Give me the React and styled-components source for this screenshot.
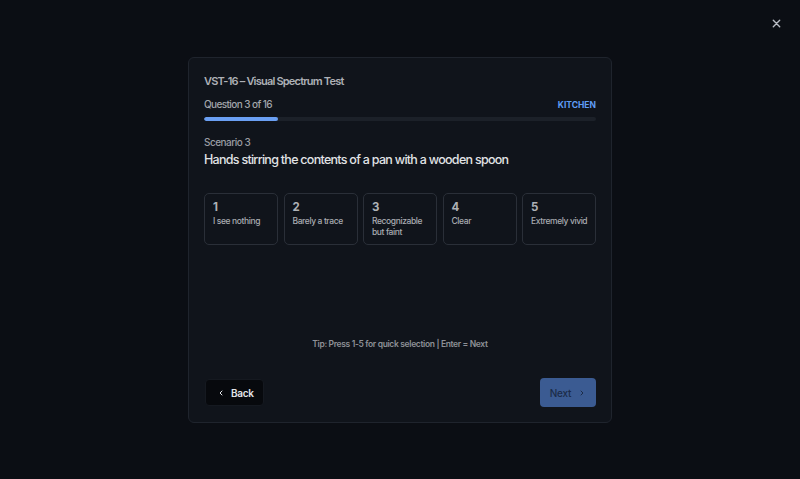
import React from 'react';
import styled, { createGlobalStyle } from 'styled-components';

const GlobalStyle = createGlobalStyle`
  html, body {
    margin: 0;
    padding: 0;
    background: #0b0e14;
    font-family: Inter, "Noto Sans", sans-serif;
  }
  * { box-sizing: border-box; }
`

const Screen = styled.div`
  position: relative;
  width: 800px;
  height: 479px;
  background: #0b0e14;
  display: flex;
  align-items: center;
  justify-content: center;
`

const CloseBtn = styled.button`
  position: absolute;
  top: 16px;
  right: 17px;
  width: 14px;
  height: 14px;
  padding: 0;
  border: none;
  background: none;
  color: #b8bcc4;
  display: flex;
  align-items: center;
  justify-content: center;
  cursor: pointer;
`

const Card = styled.div`
  width: 424px;
  height: 366px;
  margin-top: 1px;
  background: #10141b;
  border: 1px solid #1f242d;
  border-radius: 6px;
  padding: 16px 15px 15px 15px;
  display: flex;
  flex-direction: column;
`

const Title = styled.div`
  font-size: 11px;
  font-weight: 600;
  letter-spacing: -0.8px;
  color: #aeb1b7;
  line-height: 14px;
`

const ProgressHead = styled.div`
  margin-top: 10px;
  display: flex;
  justify-content: space-between;
  align-items: center;
`

const Question = styled.div`
  font-size: 10px;
  font-weight: 500;
  letter-spacing: -0.6px;
  color: #a3a6ac;
  line-height: 13px;
`

const Tag = styled.div`
  font-size: 8.5px;
  font-weight: 700;
  color: #5f9cf5;
`

const Track = styled.div`
  margin-top: 6px;
  height: 4px;
  border-radius: 2px;
  background: #1c2129;
  overflow: hidden;
`

const Fill = styled.div`
  height: 100%;
  border-radius: 2px;
  background: #6a9ff2;
`

const Scenario = styled.div`
  margin-top: 15px;
  font-size: 10px;
  font-weight: 500;
  letter-spacing: -0.5px;
  color: #9a9da3;
  line-height: 13px;
`

const Prompt = styled.div`
  margin-top: 3px;
  font-size: 12.5px;
  font-weight: 500;
  letter-spacing: -0.72px;
  color: #e1e3e6;
  line-height: 16px;
`

const Options = styled.div`
  margin-top: 25px;
  display: grid;
  grid-template-columns: repeat(5, 1fr);
  gap: 5.5px;
`

const Option = styled.button`
  height: 52px;
  background: #10141b;
  border: 1px solid #2a2f38;
  border-radius: 5px;
  padding: 6px 3px 6px 8px;
  text-align: left;
  display: flex;
  flex-direction: column;
  align-items: flex-start;
  justify-content: flex-start;
  font-family: inherit;
  cursor: pointer;
`

const Num = styled.div`
  font-size: 11.5px;
  font-weight: 700;
  color: #aeb1b6;
  line-height: 14px;
`

const Label = styled.div`
  margin-top: 2px;
  font-size: 8.5px;
  font-weight: 500;
  letter-spacing: -0.4px;
  color: #a9acb2;
  line-height: 11px;
`

const Spacer = styled.div`
  flex: 1;
`

const Tip = styled.div`
  text-align: center;
  font-size: 8.5px;
  font-weight: 600;
  letter-spacing: -0.35px;
  color: #8e9197;
  margin-bottom: 29px;
`

const Footer = styled.div`
  display: flex;
  justify-content: space-between;
  align-items: center;
`

const BackBtn = styled.button`
  margin-left: 1px;
  height: 27px;
  padding: 0 9px 0 11px;
  background: #07090d;
  border: 1px solid #151920;
  border-radius: 4px;
  color: #e2e4e8;
  font-family: inherit;
  font-size: 10px;
  font-weight: 600;
  letter-spacing: -0.3px;
  display: flex;
  align-items: center;
  gap: 6px;
  cursor: pointer;
`

const NextBtn = styled.button`
  height: 29px;
  padding: 0 10px;
  background: #3b5b92;
  border: none;
  border-radius: 4px;
  color: #1c2c48;
  font-family: inherit;
  font-size: 10px;
  font-weight: 500;
  letter-spacing: -0.3px;
  display: flex;
  align-items: center;
  gap: 7px;
  cursor: default;
`

const Chevron = ({ dir }) => (
  <svg width="8" height="8" viewBox="0 0 24 24" fill="none" stroke="currentColor" strokeWidth="3" strokeLinecap="round" strokeLinejoin="round">
    {dir === 'left' ? <path d="M15 18l-6-6 6-6" /> : <path d="M9 18l6-6-6-6" />}
  </svg>
)

const options = [
  { n: 1, label: 'I see nothing' },
  { n: 2, label: 'Barely a trace' },
  { n: 3, label: 'Recognizable but faint' },
  { n: 4, label: 'Clear' },
  { n: 5, label: 'Extremely vivid' },
]

const App = () => {
  const current = 3
  const total = 16
  return (
    <Screen>
      <GlobalStyle />
      <CloseBtn aria-label="Close">
        <svg width="11" height="11" viewBox="0 0 24 24" fill="none" stroke="currentColor" strokeWidth="3" strokeLinecap="round">
          <path d="M5 5l14 14M19 5L5 19" />
        </svg>
      </CloseBtn>
      <Card>
        <Title>VST-16 – Visual Spectrum Test</Title>
        <ProgressHead>
          <Question>Question {current} of {total}</Question>
          <Tag>KITCHEN</Tag>
        </ProgressHead>
        <Track>
          <Fill style={{ width: `${(current / total) * 100}%` }} />
        </Track>
        <Scenario>Scenario 3</Scenario>
        <Prompt>Hands stirring the contents of a pan with a wooden spoon</Prompt>
        <Options>
          {options.map(o => (
            <Option key={o.n}>
              <Num>{o.n}</Num>
              <Label>{o.label}</Label>
            </Option>
          ))}
        </Options>
        <Spacer />
        <Tip>Tip: Press 1-5 for quick selection | Enter = Next</Tip>
        <Footer>
          <BackBtn><Chevron dir="left" />Back</BackBtn>
          <NextBtn>Next<Chevron dir="right" /></NextBtn>
        </Footer>
      </Card>
    </Screen>
  );
};

export default App;
